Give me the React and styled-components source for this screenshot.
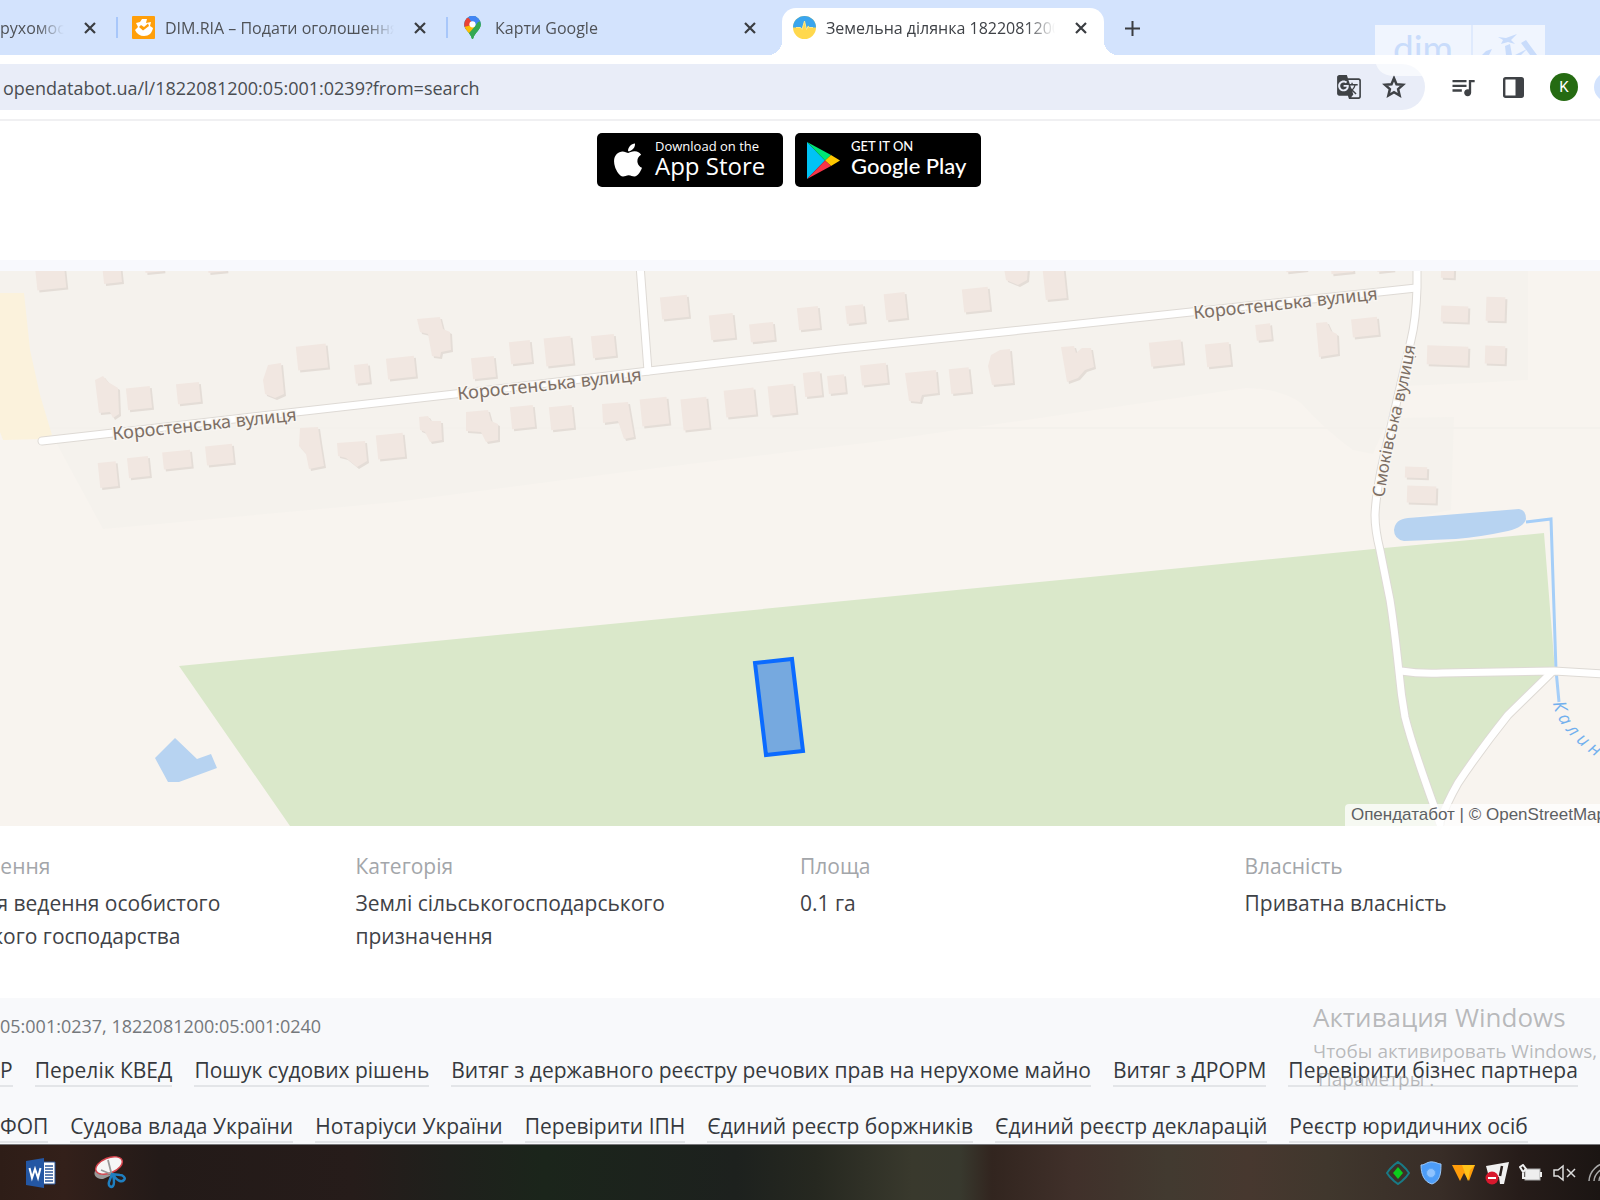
import React from 'react'
import { FaApple } from 'react-icons/fa'
import { MdGTranslate, MdQueueMusic } from 'react-icons/md'
import styled, { createGlobalStyle } from 'styled-components'

const GlobalStyle = createGlobalStyle`
  * {
    box-sizing: border-box;
  }
  body {
    margin: 0;
    background: #fff;
    color: #3f4247;
    font-family: 'Open Sans', 'Noto Sans', sans-serif;
    overflow: hidden;
  }
  button {
    border: 0;
    padding: 0;
    background: none;
    color: inherit;
    font: inherit;
  }
  a {
    color: inherit;
    text-decoration: none;
  }
  svg {
    display: block;
    flex: none;
  }
`

const Page = styled.div`
  position: relative;
  display: flex;
  flex-direction: column;
  min-height: 100vh;
  overflow: hidden;
`

/* browser chrome */

const TabStrip = styled.div`
  display: flex;
  align-items: flex-end;
  height: 55px;
  background: #d3e3fd;
`

const Tab = styled.div`
  position: relative;
  display: flex;
  align-items: center;
  flex: none;
  width: ${({ $width }) => $width || 330}px;
  height: 47px;
  padding: 0 ${({ $end }) => $end || 16}px 8px ${({ $first }) => ($first ? 0 : 14)}px;
  color: #4f5257;
  font-size: 16px;
  border-right: ${({ $divider }) => ($divider ? '2px solid transparent' : '0')};
  border-image: ${({ $divider }) =>
    $divider ? 'linear-gradient(transparent 9px, #a8c7fa 9px 30px, transparent 30px) 0 2 0 0' : 'none'};
`

const ActiveTab = styled(Tab)`
  background: #fff;
  color: #3f4247;
  border-radius: 14px 14px 0 0;
  padding: 0 13px 8px 11px;
  &::before,
  &::after {
    content: '';
    position: absolute;
    bottom: 0;
    width: 14px;
    height: 14px;
  }
  &::before {
    left: -14px;
    background: radial-gradient(circle at 0 0, transparent 14px, #fff 14px);
  }
  &::after {
    right: -14px;
    background: radial-gradient(circle at 100% 0, transparent 14px, #fff 14px);
  }
`

const TabTitle = styled.span`
  flex: 1;
  min-width: 0;
  margin: 0 16px 0 ${({ $flush }) => ($flush ? 0 : 10)}px;
  overflow: hidden;
  white-space: nowrap;
  line-height: 24px;
  mask-image: linear-gradient(to right, #000 calc(100% - 28px), transparent);
`

const TabButton = styled.button`
  display: flex;
  align-items: center;
  justify-content: center;
  flex: none;
  width: 20px;
  height: 20px;
  color: #3a3d41;
`

const NewTab = styled(TabButton)`
  margin: 0 0 17px 18px;
`

const Toolbar = styled.div`
  display: flex;
  align-items: center;
  height: 66px;
  border-bottom: 2px solid #f0f0f2;
`

const AddressBar = styled.div`
  display: flex;
  align-items: center;
  flex: 1;
  height: 46px;
  padding: 0 19px 0 3px;
  gap: 20px;
  background: #e9edf8;
  border-radius: 0 23px 23px 0;
  color: #3f4246;
`

const AddressInput = styled.input`
  flex: 1;
  min-width: 0;
  padding: 2px 0 0;
  border: 0;
  outline: 0;
  background: none;
  color: #4a4d52;
  font-family: inherit;
  font-size: 18px;
`

const Actions = styled.div`
  display: flex;
  align-items: center;
  gap: 26px;
  flex: none;
  width: 175px;
  padding-left: 24px;
  color: #3f4246;
`

const IconButton = styled.button`
  display: flex;
  flex: none;
`

const Avatar = styled.button`
  flex: none;
  width: 28px;
  height: 28px;
  border-radius: 50%;
  background: #256b12;
  color: #fff;
  font-family: Roboto, sans-serif;
  font-size: 15px;
  line-height: 28px;
`

const UpdateChip = styled.button`
  flex: none;
  width: 100px;
  height: 30px;
  margin-left: -10px;
  border-radius: 15px;
  background: #d3e3fd;
`

const Watermark = styled.svg`
  position: absolute;
  top: 25px;
  right: 55px;
`

/* page content */

const Stores = styled.div`
  display: flex;
  justify-content: center;
  gap: 12px;
  height: 139px;
  padding: 12px 22px 0 0;
`

const StoreBadge = styled.a`
  display: flex;
  align-items: center;
  gap: ${({ $gap }) => $gap}px;
  width: 186px;
  height: 54px;
  padding-left: 12px;
  background: #000;
  border-radius: 5px;
  color: #fff;
`

const StoreText = styled.span`
  display: flex;
  flex-direction: column;
  padding-bottom: 2px;
  font-family: ${({ $family }) => $family}, sans-serif;
  font-size: ${({ $size }) => $size}px;
  line-height: 26px;
  font-weight: 500;
  white-space: nowrap;
`

const StoreHint = styled.small`
  font-size: 13px;
  line-height: 14px;
`

const MapFrame = styled.section`
  position: relative;
  height: 566px;
  border-top: 11px solid #f8f9fd;
`

const MapCanvas = styled.svg`
  width: 100%;
  height: 555px;
`

const Attribution = styled.div`
  position: absolute;
  right: -12px;
  bottom: 0;
  padding: 0 6px;
  background: rgba(255, 255, 255, 0.75);
  border-radius: 4px 0 0 0;
  color: #5d6063;
  font-family: 'Liberation Sans', Arial, sans-serif;
  font-size: 17px;
  line-height: 22px;
  white-space: nowrap;
`

const Facts = styled.dl`
  display: grid;
  grid-template-columns: repeat(4, 1fr);
  height: 172px;
  margin: 0 -89px;
  padding-top: 24px;
`

const Fact = styled.div`
  dt {
    color: #a3a6aa;
    font-size: 21px;
    line-height: 33px;
  }
  dd {
    max-width: 340px;
    margin: 4px 0 0;
    font-size: 21px;
    line-height: 33px;
  }
`

const Footer = styled.footer`
  flex: 1;
  position: relative;
  overflow: hidden;
  background: #f8f9fb;
  padding-top: 14px;
`

const Neighbours = styled.p`
  margin: 0;
  color: #75787c;
  font-size: 18px;
  line-height: 28px;
`

const LinkRow = styled.nav`
  display: flex;
  gap: 22px;
  margin-top: 17px;
  white-space: nowrap;
  & + & {
    margin-top: 26px;
  }
`

const FooterLink = styled.a`
  height: 30px;
  border-bottom: 2px solid #e3e5e8;
  color: #36393e;
  font-size: 21px;
  line-height: 26px;
`

const Activation = styled.div`
  position: absolute;
  top: 1px;
  left: calc(100% - 287px);
  color: rgba(120, 122, 124, 0.5);
  font-size: 19px;
  line-height: 28px;
  white-space: nowrap;
  pointer-events: none;
`

const ActivationTitle = styled.div`
  margin-bottom: 2px;
  font-size: 26px;
  line-height: 36px;
`

const Taskbar = styled.div`
  display: flex;
  align-items: center;
  justify-content: space-between;
  height: 56px;
  padding: 0 0 0 26px;
  overflow: hidden;
  border-top: 1px solid #77777a;
  background: linear-gradient(
    to right,
    #2e1d17 0,
    #33201a 4%,
    #231a18 10%,
    #261c1a 22%,
    #1f201c 28%,
    #1b251b 34%,
    #1d211e 46%,
    #262820 51%,
    #39392d 57%,
    #38392e 60%,
    #32251f 62%,
    #40302a 67%,
    #423a30 73%,
    #47382f 78%,
    #40372d 83%,
    #382d27 90%,
    #261c19 95%,
    #1b1513 100%
  );
`

const TaskGroup = styled.div`
  display: flex;
  align-items: center;
  gap: ${({ $gap }) => $gap}px;
`

const Tray = styled(TaskGroup)`
  margin-right: -11px;
`

const buildings = [
  [36, 262, 31, 28], [103, 262, 20, 22], [145, 262, 20, 11], [208, 262, 20, 11], [127, 387, 26, 23],
  [177, 383, 25, 21], [297, 345, 32, 25], [355, 364, 16, 20], [387, 357, 30, 22], [472, 357, 25, 22],
  [510, 341, 23, 23], [99, 462, 20, 26], [128, 457, 23, 21], [163, 451, 30, 18], [206, 445, 29, 20],
  [377, 434, 29, 25], [511, 406, 25, 23], [545, 337, 29, 29], [592, 335, 25, 23], [661, 296, 29, 23],
  [710, 314, 26, 26], [750, 323, 26, 19], [798, 307, 23, 23], [846, 305, 20, 19], [885, 293, 23, 27],
  [963, 288, 28, 24], [1044, 264, 23, 36], [550, 406, 25, 24], [641, 398, 29, 28], [682, 398, 28, 32],
  [725, 389, 32, 28], [769, 385, 28, 30], [804, 372, 19, 25], [828, 375, 19, 19], [861, 364, 28, 21],
  [950, 368, 22, 26], [1150, 341, 34, 25], [1206, 343, 26, 24], [1256, 324, 17, 17], [1352, 318, 28, 19],
  [1286, 263, 22, 9], [1331, 263, 24, 11], [1377, 263, 18, 9], [1441, 264, 15, 15], [1441, 306, 29, 17],
  [1486, 297, 21, 25], [1427, 346, 43, 20], [1485, 346, 22, 19], [1405, 467, 24, 12], [1407, 486, 31, 18],
]

const irregularBuildings = [
  '95,380 103,376 108,382 118,388 119,414 113,418 110,412 99,413',
  '268,365 281,363 284,394 275,398 265,394 263,380',
  '417,319 440,317 443,329 450,332 451,350 441,352 440,357 432,356 428,334 420,332',
  '300,428 318,427 320,441 324,466 309,469 306,454 299,446',
  '337,443 365,441 367,461 357,467 346,458 338,456',
  '419,417 428,416 431,421 441,421 442,440 430,442 425,432 420,430',
  '466,412 488,410 491,421 498,424 498,440 486,442 481,432 466,431',
  '1004,268 1028,268 1027,280 1018,285 1006,280',
  '602,404 628,402 634,437 624,439 618,421 603,423',
  '905,373 936,370 938,393 922,395 920,402 909,401',
  '991,355 1000,350 1010,349 1013,383 992,385 988,366',
  '1061,347 1074,346 1076,353 1082,348 1091,348 1094,367 1085,370 1078,378 1067,382',
  '1316,323 1327,322 1331,331 1337,334 1338,354 1319,357',
]

const roads = [
  'M640 265 L648 371',
  'M42 441 L113 433 L296 412 L455 394 L649 371 L840 349 L1060 326 L1191 312 L1379 292 L1416 288',
  'M1401 671 Q1420 674 1442 673 L1554 671 L1604 674',
  'M1552 672 L1508 715 Q1480 750 1458 783 Q1446 804 1440 822',
  'M1417 265 V288 Q1416 320 1411 340 L1386 448 Q1376 490 1375 515 Q1375 530 1380 550 L1390 600 Q1394 625 1399 672 Q1401 695 1405 717 Q1412 745 1434 806 L1440 824',
]

const streetLabels = [
  [113, 440, -6],
  [458, 400, -6],
  [1194, 319, -6],
]

const linkRows = [
  [
    'Р',
    'Перелік КВЕД',
    'Пошук судових рішень',
    'Витяг з державного реєстру речових прав на нерухоме майно',
    'Витяг з ДРОРМ',
    'Перевірити бізнес партнера',
  ],
  [
    'ФОП',
    'Судова влада України',
    'Нотаріуси України',
    'Перевірити ІПН',
    'Єдиний реєстр боржників',
    'Єдиний реєстр декларацій',
    'Реєстр юридичних осіб',
  ],
]

const facts = [
  ['Призначення', '01.03 Для ведення особистого селянського господарства'],
  ['Категорія', 'Землі сільськогосподарського призначення'],
  ['Площа', '0.1 га'],
  ['Власність', 'Приватна власність'],
]

const CloseButton = () => (
  <TabButton aria-label="Закрити">
    <svg width="12" height="12" viewBox="0 0 12 12" stroke="currentColor" strokeWidth="2.2">
      <path d="M1 1l10 10M11 1L1 11" />
    </svg>
  </TabButton>
)

const DimIcon = () => (
  <svg width="23" height="23" viewBox="0 0 23 23">
    <rect width="23" height="23" rx="1" fill="#ff9f0a" />
    <path
      d="M4 7l4-1 2-3h5l-1 4 5-1-1 4 3 2c-1 5-4 8-9 8-4 0-7-2-9-6l3-3z"
      fill="#fff"
    />
    <path d="M7 11l4 3.500 6-4.500-1-2.500-4 3.500-3-2z" fill="#ff9f0a" />
  </svg>
)

const PinIcon = () => (
  <svg width="23" height="23" viewBox="-2 0 23 23">
    <defs>
      <clipPath id="pin">
        <path d="M8.500 0A8.300 8.300 0 0 0 .2 8.300c0 3 1.500 4.900 3.400 7.200C5.400 17.700 7 19.500 7.700 22.200c.2 1 1.400 1 1.600 0 .7-2.700 2.300-4.500 4.100-6.700 1.900-2.300 3.400-4.200 3.400-7.200A8.300 8.300 0 0 0 8.500 0z" />
      </clipPath>
    </defs>
    <g clipPath="url(#pin)">
      <path d="M0 0h17v23H0z" fill="#34a853" />
      <path d="M0 16L17-4H0z" fill="#4285f4" />
      <path d="M-1 2.500L4 1.500 9 6 2 14l-3-3z" fill="#ea4335" />
      <path d="M0 11l6-1.500L12 10 4 18 0 14z" fill="#fbbc04" />
      <path d="M5 0h12v8l-5 4L6 4z" fill="#4285f4" />
      <path d="M17 5v18H6l-1-5 9-12z" fill="#34a853" />
    </g>
    <circle cx="8.500" cy="8.300" r="3.100" fill="#fff" />
  </svg>
)

const OpendatabotIcon = () => (
  <svg width="23" height="23" viewBox="0 0 23 23">
    <circle cx="11.500" cy="11.500" r="11.500" fill="#ffd84d" />
    <path d="M0 11.500a11.500 11.500 0 0 1 23 0h-6l-2-2-1.500 4L11.500 5 9 13.500 7.500 11.500z" fill="#3aa5ee" />
    <path d="M3 11.500h4.500l1.500 2L11.500 5l2 8.500 1.500-3 1.500 1H20" fill="none" stroke="#ffe98c" />
  </svg>
)

const GooglePlayIcon = () => (
  <svg width="33" height="37" viewBox="0 0 33 37">
    <path d="M0 0v37l18-18.500z" fill="#00c3f5" />
    <path d="M0 0l24 13-6 5.500z" fill="#00e676" />
    <path d="M24 13l9 5.500-9 5.500-6-5.500z" fill="#ffc800" />
    <path d="M0 37l18-18.500 6 5.500z" fill="#f63448" />
  </svg>
)

const WordIcon = () => (
  <svg width="30" height="30" viewBox="0 0 30 30">
    <path d="M16 4h13v22H16z" fill="#fff" stroke="#2b579a" />
    <path d="M19 8h8M19 11h8M19 14h8M19 17h8M19 20h8M19 23h8" stroke="#2b579a" strokeWidth="1.400" />
    <path d="M0 3l18-3v30L0 27z" fill="#2457a4" />
    <path d="M3.500 10l2.500 10 3-9 3 9 2.500-10" fill="none" stroke="#fff" strokeWidth="2" />
  </svg>
)

const SnippingIcon = () => (
  <svg width="32" height="33" viewBox="0 0 32 33">
    <path d="M1 15c-2 5 2 8 8 8l9-4z" fill="#999" />
    <ellipse cx="15" cy="9.500" rx="14" ry="7.500" transform="rotate(-22 15 9.500)" fill="#f6f6f6" stroke="#d5434c" strokeWidth="1.500" />
    <path d="M14 4l4 16M7 14l12 5" stroke="#999" strokeWidth="1.800" />
    <path
      d="M18 18l-3 8c-1 4 2 6 4 4s1-6 0-12c4 8 9 8 11 6s-1-5-4-5z"
      fill="none"
      stroke="#1f7fc0"
      strokeWidth="2.500"
    />
  </svg>
)

const CadastralMap = () => (
  <MapCanvas viewBox="0 271 1600 555" preserveAspectRatio="xMidYMid slice" role="img" aria-label="Карта ділянки">
    <defs>
      <path id="smokivska" d="M1384 498 Q1391 450 1402 410 Q1412 370 1418 330" />
      <path id="kalynivka" d="M1553 703 Q1560 740 1616 768" />
    </defs>
    <path d="M0 271h1600v555H0z" fill="#f8f4ef" />
    <path
      d="M0 271H1528V380L1475 383 1402 386 1373 454 1353 450Q1325 430 1301 403 1280 388 1246 388L1060 415 874 442 805 450 640 470 396 502 103 529 52 435 0 293z"
      fill="#f5f2ed"
    />
    <path d="M1395 418L1454 417 1451 510 1399 520 1377 520z" fill="#f5f2ed" />
    <path d="M0 428h1600" stroke="#f4f1ec" strokeWidth="2" />
    <path d="M0 293L24 293 30 350 40 395 52 435 44 439 3 440 0 432z" fill="#fbf2dc" />
    <path
      d="M179 666L1060 580 1384 548 1544 533 1555 671 1508 715 1458 783 1440 812V826H290z"
      fill="#dae8ca"
    />
    <path d="M175 738L197 759 211 754 217 768 179 782 168 782 155 758z" fill="#b7d3f1" />
    <path
      d="M1408 518L1519 509Q1526 510 1526 519 1524 527 1508 531 1480 537 1456 539L1404 541Q1394 539 1394 530 1395 519 1408 518z"
      fill="#b7d3f1"
    />
    <path d="M1526 522L1551 519 1556 670 1559 702" fill="none" stroke="#a5cef8" strokeWidth="3" />

    {[0, 1].map((layer) => (
      <g key={layer} transform={layer ? undefined : 'translate(2 2)'} fill={layer ? '#f1e7e1' : '#e4ddd7'}>
        {buildings.map(([x, y, w, h]) => (
          <rect
            key={`${x}-${y}`}
            x={x}
            y={y}
            width={w - 2}
            height={h - 1}
            transform={`rotate(${x > 1400 ? 2 : -6} ${x + w / 2} ${y + h / 2})`}
          />
        ))}
        {irregularBuildings.map((points) => (
          <polygon key={points} points={points} />
        ))}
      </g>
    ))}

    <g fill="none" strokeLinecap="round" strokeLinejoin="round">
      {roads.map((d) => (
        <path key={d} d={d} stroke="#dedad5" strokeWidth="9" />
      ))}
      {roads.map((d) => (
        <path key={d} d={d} stroke="#fff" strokeWidth="7" />
      ))}
    </g>

    <g
      fill="#7d6f65"
      stroke="#f8f5f1"
      strokeWidth="3"
      paintOrder="stroke"
      fontFamily="'Noto Sans', sans-serif"
      fontSize="18"
    >
      {streetLabels.map(([x, y, angle]) => (
        <text key={x} transform={`translate(${x} ${y}) rotate(${angle})`}>
          Коростенська вулиця
        </text>
      ))}
      <text fontSize="17">
        <textPath href="#smokivska">Смоківська вулиця</textPath>
      </text>
    </g>
    <text fill="#72b0ee" fontSize="18" fontStyle="italic" dx="0 5 5 5 5 5">
      <textPath href="#kalynivka">Калинівка</textPath>
    </text>

    <path d="M755 663L792 659 803 751 766 755z" fill="#76a9df" stroke="#0b6bff" strokeWidth="4" />
  </MapCanvas>
)

const App = () => {
  return (
    <Page>
      <GlobalStyle />
      <TabStrip>
        <Tab $first $divider $width={118}>
          <TabTitle $flush>рухомості</TabTitle>
          <CloseButton />
        </Tab>
        <Tab $divider>
          <DimIcon />
          <TabTitle>DIM.RIA – Подати оголошення</TabTitle>
          <CloseButton />
        </Tab>
        <Tab $width={334} $end={22}>
          <PinIcon />
          <TabTitle>Карти Google</TabTitle>
          <CloseButton />
        </Tab>
        <ActiveTab $width={322}>
          <OpendatabotIcon />
          <TabTitle>Земельна ділянка 1822081200:05</TabTitle>
          <CloseButton />
        </ActiveTab>
        <NewTab aria-label="Нова вкладка">
          <svg width="15" height="15" viewBox="0 0 15 15" stroke="currentColor" strokeWidth="2">
            <path d="M7.500 0v15M0 7.500h15" />
          </svg>
        </NewTab>
      </TabStrip>

      <Toolbar>
        <AddressBar>
          <AddressInput aria-label="Адреса" defaultValue="opendatabot.ua/l/1822081200:05:001:0239?from=search" />
          <IconButton aria-label="Перекласти">
            <MdGTranslate size={26} />
          </IconButton>
          <IconButton aria-label="Додати закладку">
            <svg width="24" height="24" viewBox="0 0 24 24" fill="none" stroke="currentColor" strokeWidth="2.500">
              <path d="M12 3.200l2.500 6 6.500.6-4.900 4.300 1.500 6.400L12 17.100l-5.600 3.400 1.500-6.400L3 9.800l6.500-.6z" />
            </svg>
          </IconButton>
        </AddressBar>
        <Actions>
          <IconButton aria-label="Медіа">
            <MdQueueMusic size={28} />
          </IconButton>
          <IconButton aria-label="Бічна панель">
            <svg width="21" height="21" viewBox="0 0 21 21">
              <rect x="1.200" y="1.200" width="18.600" height="18.600" rx="1.500" fill="none" stroke="currentColor" strokeWidth="2.400" />
              <path d="M12.500 1H20v19h-7.500z" fill="currentColor" />
            </svg>
          </IconButton>
          <Avatar>K</Avatar>
          <UpdateChip aria-label="Оновити" />
        </Actions>
      </Toolbar>

      <Stores>
        <StoreBadge href="#" $gap={8}>
          <FaApple size={38} />
          <StoreText $family="'Open Sans'" $size={24}>
            <StoreHint>Download on the</StoreHint>
            App Store
          </StoreText>
        </StoreBadge>
        <StoreBadge href="#" $gap={11}>
          <GooglePlayIcon />
          <StoreText $family="Lato" $size={22}>
            <StoreHint>GET IT ON</StoreHint>
            Google Play
          </StoreText>
        </StoreBadge>
      </Stores>

      <MapFrame>
        <CadastralMap />
        <Attribution>
          <a href="#">Опендатабот</a> | © <a href="#">OpenStreetMap</a>
        </Attribution>
      </MapFrame>

      <Facts>
        {facts.map(([label, value]) => (
          <Fact key={label}>
            <dt>{label}</dt>
            <dd>{value}</dd>
          </Fact>
        ))}
      </Facts>

      <Footer>
        <Neighbours>05:001:0237, 1822081200:05:001:0240</Neighbours>
        {linkRows.map((row) => (
          <LinkRow key={row[0]}>
            {row.map((title) => (
              <FooterLink key={title} href="#">
                {title}
              </FooterLink>
            ))}
          </LinkRow>
        ))}
        <Activation>
          <ActivationTitle>Активация Windows</ActivationTitle>
          <div>Чтобы активировать Windows,</div>
          <div>&nbsp;Параметры .</div>
        </Activation>
      </Footer>

      <Taskbar>
        <TaskGroup $gap={38}>
          <WordIcon />
          <SnippingIcon />
        </TaskGroup>
        <Tray $gap={10}>
          <svg width="24" height="24" viewBox="0 0 24 24">
            <path d="M12 1l4 3 4 4 3 4-3 4-4 4-4 3-4-3-4-4-3-4 3-4 4-4z" fill="none" stroke="#197a86" strokeWidth="2" />
            <path d="M12 6l5 6-5 6-5-6z" fill="#0ccc1c" />
          </svg>
          <svg width="22" height="24" viewBox="0 0 22 24">
            <path d="M1 4C5 4 8 0 13 1c3 0 5 2 8 2 0 10-1 17-9 20C4 21 1 13 1 4z" fill="#4d9df8" stroke="#9cc8f8" />
            <circle cx="11" cy="12" r="4.500" fill="#8fc3ff" stroke="#5aa5f5" />
          </svg>
          <svg width="23" height="18" viewBox="0 0 23 18">
            <path d="M0 1h23l-6 16-5-8-4 8z" fill="#ff9d0a" />
            <path d="M10 1h13l-5 5-2 11z" fill="#ffc21a" />
          </svg>
          <svg width="24" height="24" viewBox="0 0 24 24">
            <path d="M1 5L24 1l-5 22h-4l-1-7H4z" fill="#f1f1f1" />
            <path d="M17 5l-2 10" stroke="#2b211e" strokeWidth="2.500" />
            <circle cx="7" cy="17" r="6.500" fill="#d8182d" />
            <path d="M3 17h8" stroke="#fff" strokeWidth="2" />
          </svg>
          <svg width="24" height="18" viewBox="0 0 24 18">
            <rect x="6" y="5" width="15" height="11" fill="#eee" stroke="#aaa" />
            <path d="M22 8v5M1 3l3-2 3 4-3 3zM4 7v7h3" fill="none" stroke="#eee" strokeWidth="2" />
          </svg>
          <svg width="24" height="18" viewBox="0 0 24 18" fill="none" stroke="#ddd" strokeWidth="1.500">
            <path d="M1 6h4l5-4v14l-5-4H1zM14 5l8 8M22 5l-8 8" />
          </svg>
          <svg width="24" height="24" viewBox="0 0 24 24" fill="none" stroke="#aaa" strokeWidth="1.500">
            <path d="M2 20A19 19 0 0 1 21 2M7 20A14 14 0 0 1 21 7M12 20a9 9 0 0 1 9-9" />
          </svg>
        </Tray>
      </Taskbar>

      <Watermark width="170" height="51" viewBox="0 0 170 51" aria-hidden="true">
        <defs>
          <clipPath id="strip">
            <rect width="170" height="30" />
          </clipPath>
        </defs>
        <path d="M0 0h170v51H20Q0 51 0 31z" fill="#fff" fillOpacity="0.65" />
        <g clipPath="url(#strip)" fill="#c9dcfb">
          <path d="M96 0h2v30h-2z" fill="#dfeafd" />
          <text x="18" y="37" fontSize="37" fontFamily="Lato, sans-serif">
            dim
          </text>
          <path d="M123 12l8 1 11-4-6 6 4 4-7-2-7 2 2-4z" />
          <path d="M107 30l4-4 6-2-3 6zM130 21l5-2 2 11h-6zM146 18l5-3 11 15h-7zM152 24l-6 6h-6z" />
        </g>
      </Watermark>
    </Page>
  )
}

export default App
